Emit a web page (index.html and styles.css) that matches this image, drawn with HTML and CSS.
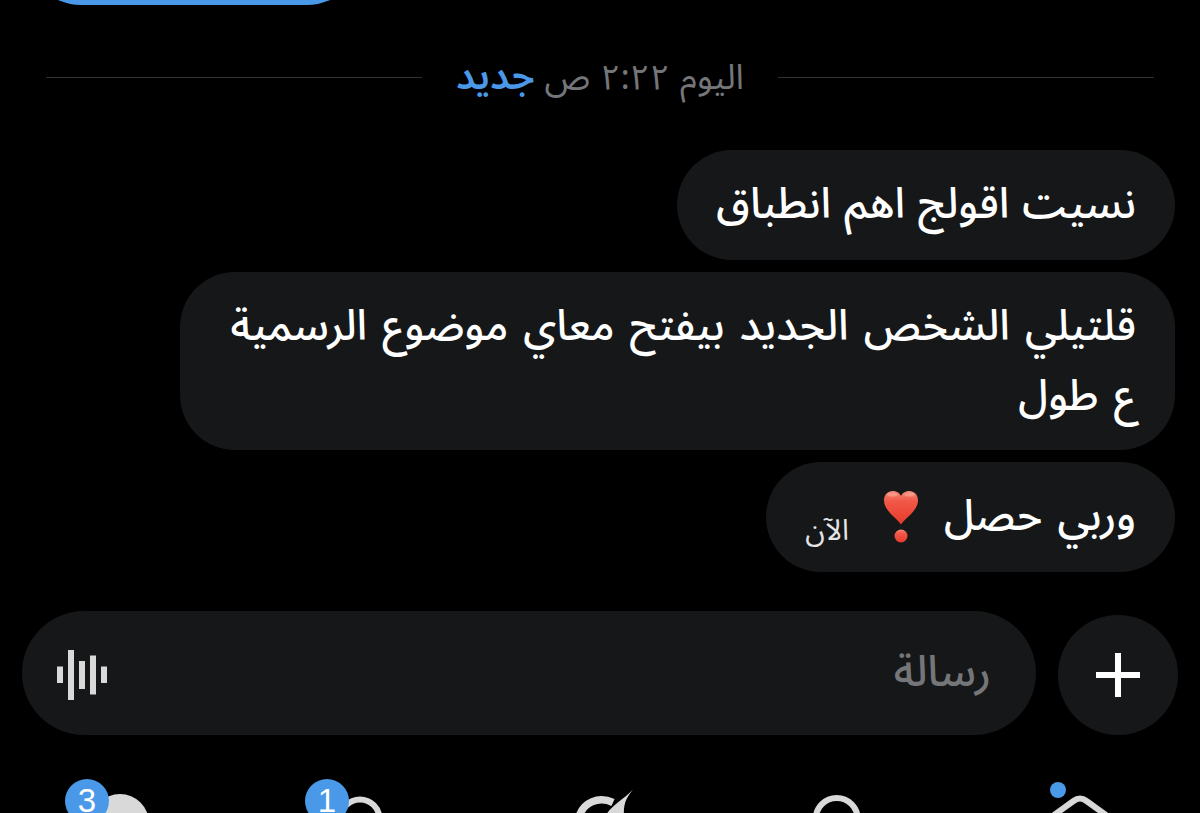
FILE: index.html
```html
<!DOCTYPE html>
<html lang="ar" dir="rtl">
<head>
  <meta charset="UTF-8">
  <meta name="viewport" content="width=device-width, initial-scale=1.0">
  <title>الرسائل</title>
  <link rel="stylesheet" href="styles.css">
</head>
<body>
  <div class="app">
    <div class="sent-bubble"></div>

    <div class="divider">
      <span class="line"></span>
      <p class="divider-text"><span class="time">اليوم ٢:٢٢ ص</span> <strong>جديد</strong></p>
      <span class="line"></span>
    </div>

    <div class="messages">
      <div class="bubble first"><p>نسيت اقولج اهم انطباق</p></div>
      <div class="bubble second">
        <p>قلتيلي الشخص الجديد بيفتح معاي موضوع الرسمية<br>ع طول</p>
      </div>
      <div class="bubble third">
        <p>وربي حصل</p>
        <svg class="heart" viewBox="0 0 36 54" role="img" aria-label="❣">
          <defs>
            <linearGradient id="red" x1="0" y1="0" x2="0" y2="1">
              <stop offset="0" stop-color="#f58a78"/>
              <stop offset="0.3" stop-color="#f25847"/>
              <stop offset="1" stop-color="#e83a2c"/>
            </linearGradient>
          </defs>
          <path d="M18 34.500C15 29 1 21 1 10.500C1 4.500 5 1 9.700 1C14 1 17 3.500 18 6C19 3.500 22 1 26.300 1C31 1 35 4.500 35 10.500C35 21 21 29 18 34.500Z" fill="url(#red)"/>
          <circle cx="18" cy="46" r="6.500" fill="url(#red)"/>
          <ellipse cx="9.500" cy="4.500" rx="5" ry="2" fill="#ffc4b8" opacity="0.4"/>
          <ellipse cx="26.500" cy="4.500" rx="5" ry="2" fill="#ffc4b8" opacity="0.4"/>
        </svg>
        <span class="now">الآن</span>
      </div>
    </div>

    <div class="composer">
      <button class="add" aria-label="إضافة">
        <svg viewBox="0 0 44 44"><path d="M22 0V44M0 22H44"/></svg>
      </button>
      <div class="field">
        <span class="placeholder">رسالة</span>
        <svg class="wave" viewBox="0 0 50 50">
          <path d="M3 16.500V33M14 0V50M25 11V39M36 5.500V44.500M47 16.500V33"/>
        </svg>
      </div>
    </div>

    <nav class="tabs">
      <a class="tab">
        <svg viewBox="0 0 240 78"><path d="M92 81.500L113.500 66Q120 61 126.500 66L148 81.500"/></svg>
        <span class="dot"></span>
      </a>
      <a class="tab">
        <svg viewBox="0 0 240 78"><circle cx="116.700" cy="84" r="21"/></svg>
      </a>
      <a class="tab">
        <svg viewBox="0 0 240 78">
          <path class="thick" d="M98.500 84C102 67 119 61 133 67.500"/>
          <path class="solid" d="M153 54.500C147 62 143 68 144 82H125C130 71 142 66 153 54.500Z"/>
        </svg>
      </a>
      <a class="tab">
        <svg viewBox="0 0 240 78"><circle cx="120" cy="84" r="19.500"/></svg>
        <span class="badge">1</span>
      </a>
      <a class="tab">
        <svg viewBox="0 0 240 78"><circle class="solid" cx="120" cy="88" r="29"/></svg>
        <span class="badge">3</span>
      </a>
    </nav>
  </div>
</body>
</html>
```
FILE: styles.css
```css
* {
  box-sizing: border-box;
}

body {
  margin: 0;
  background: #000;
  color: #fff;
  font-family: "Noto Sans Arabic", "Noto Sans", "DejaVu Sans", sans-serif;
}

p {
  margin: 0;
}

.app {
  width: 1200px;
  height: 813px;
  overflow: hidden;
  display: flex;
  flex-direction: column;
}

.sent-bubble {
  flex: none;
  width: 336px;
  height: 110px;
  margin: -105px auto 0 26px;
  border-radius: 55px;
  background: #4a99e9;
}

.divider {
  display: flex;
  align-items: center;
  justify-content: space-between;
  height: 145px;
  padding: 0 46px;
}

.line {
  width: 376px;
  height: 1px;
  background: #303234;
}

.divider-text {
  font-size: 35px;
  line-height: 50px;
  word-spacing: 1px;
  white-space: nowrap;
  color: #747679;
}

.divider-text strong {
  font-size: 38px;
  font-weight: 600;
  color: #4a99e9;
}

.messages {
  display: flex;
  flex-direction: column;
  align-items: flex-start;
  gap: 12px;
  padding-right: 25px;
}

.bubble {
  height: 110px;
  padding: 0 39px;
  border-radius: 55px;
  background: #161718;
  font-size: 42.5px;
  font-weight: 500;
  line-height: 70px;
  word-spacing: 4px;
  white-space: nowrap;
}

.first {
  width: 498px;
  padding-top: 20px;
  word-spacing: 2px;
}

.second {
  width: 995px;
  height: 178px;
  padding-top: 20px;
}

.third {
  display: flex;
  align-items: center;
  width: 409px;
}

.heart {
  flex: none;
  width: 36px;
  height: 54px;
  margin-right: 25px;
}

.now {
  margin: 28px 34px 0 0;
  font-size: 29px;
  font-weight: 400;
  line-height: 40px;
  color: #e3e5e7;
}

.composer {
  display: flex;
  align-items: flex-end;
  gap: 22px;
  height: 124px;
  margin-top: 39px;
  padding: 0 22px;
}

.add {
  display: flex;
  align-items: center;
  justify-content: center;
  width: 120px;
  height: 120px;
  padding: 0;
  border: none;
  border-radius: 50%;
  background: #161718;
}

.add svg {
  width: 44px;
  height: 44px;
  fill: none;
  stroke: #fff;
  stroke-width: 6;
}

.field {
  display: flex;
  align-items: center;
  justify-content: space-between;
  width: 1014px;
  height: 124px;
  padding: 0 45px 0 35px;
  border-radius: 62px;
  background: #161718;
}

.placeholder {
  font-size: 43px;
  font-weight: 500;
  line-height: 70px;
  color: #747679;
}

.wave {
  width: 50px;
  height: 50px;
  margin-top: 3px;
  fill: none;
  stroke: #d9d9da;
  stroke-width: 6;
}

.tabs {
  display: flex;
  height: 78px;
}

.tab {
  position: relative;
  width: 240px;
  height: 78px;
}

.tab svg {
  display: block;
  width: 240px;
  height: 78px;
  fill: none;
  stroke: #d9d9d9;
  stroke-width: 6;
}

.tab .thick {
  stroke-width: 7.5;
}

.tab .solid {
  fill: #d9d9d9;
  stroke: none;
}

.badge {
  position: absolute;
  top: 44px;
  left: 65px;
  width: 44px;
  height: 44px;
  border-radius: 50%;
  background: #4a99e9;
  font-family: "Liberation Sans", sans-serif;
  font-size: 33px;
  line-height: 44px;
  text-align: center;
}

.dot {
  position: absolute;
  top: 47px;
  left: 90px;
  width: 16px;
  height: 16px;
  border-radius: 50%;
  background: #4a99e9;
}
```
